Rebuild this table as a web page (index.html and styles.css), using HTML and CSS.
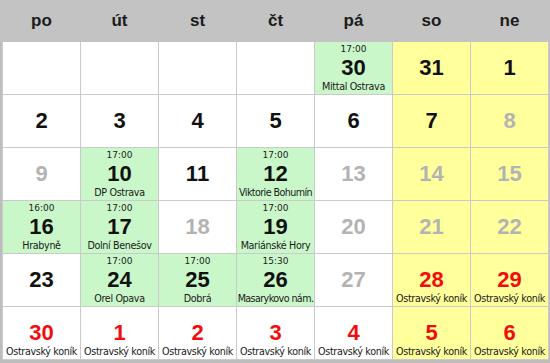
FILE: index.html
```html
<!DOCTYPE html>
<html lang="cs">
<head>
<meta charset="utf-8">
<title>Kalendář</title>
<link rel="stylesheet" href="styles.css">
</head>
<body>
<div class="cal">
  <div class="head">
    <div>po</div><div>út</div><div>st</div><div>čt</div><div>pá</div><div>so</div><div>ne</div>
  </div>
  <div class="grid">
    <div class="cell"></div>
    <div class="cell"></div>
    <div class="cell"></div>
    <div class="cell"></div>
    <div class="cell green"><span class="time">17:00</span><span class="num">30</span><span class="lbl">Mittal Ostrava</span></div>
    <div class="cell yellow"><span class="time"></span><span class="num">31</span><span class="lbl"></span></div>
    <div class="cell yellow"><span class="time"></span><span class="num">1</span><span class="lbl"></span></div>

    <div class="cell"><span class="time"></span><span class="num">2</span><span class="lbl"></span></div>
    <div class="cell"><span class="time"></span><span class="num">3</span><span class="lbl"></span></div>
    <div class="cell"><span class="time"></span><span class="num">4</span><span class="lbl"></span></div>
    <div class="cell"><span class="time"></span><span class="num">5</span><span class="lbl"></span></div>
    <div class="cell"><span class="time"></span><span class="num">6</span><span class="lbl"></span></div>
    <div class="cell yellow"><span class="time"></span><span class="num">7</span><span class="lbl"></span></div>
    <div class="cell yellow"><span class="time"></span><span class="num past">8</span><span class="lbl"></span></div>

    <div class="cell"><span class="time"></span><span class="num past">9</span><span class="lbl"></span></div>
    <div class="cell green"><span class="time">17:00</span><span class="num">10</span><span class="lbl">DP Ostrava</span></div>
    <div class="cell"><span class="time"></span><span class="num">11</span><span class="lbl"></span></div>
    <div class="cell green"><span class="time">17:00</span><span class="num">12</span><span class="lbl tight">Viktorie Bohumín</span></div>
    <div class="cell"><span class="time"></span><span class="num past">13</span><span class="lbl"></span></div>
    <div class="cell yellow"><span class="time"></span><span class="num past">14</span><span class="lbl"></span></div>
    <div class="cell yellow"><span class="time"></span><span class="num past">15</span><span class="lbl"></span></div>

    <div class="cell green"><span class="time">16:00</span><span class="num">16</span><span class="lbl">Hrabyně</span></div>
    <div class="cell green"><span class="time">17:00</span><span class="num">17</span><span class="lbl">Dolní Benešov</span></div>
    <div class="cell"><span class="time"></span><span class="num past">18</span><span class="lbl"></span></div>
    <div class="cell green"><span class="time">17:00</span><span class="num">19</span><span class="lbl">Mariánské Hory</span></div>
    <div class="cell"><span class="time"></span><span class="num past">20</span><span class="lbl"></span></div>
    <div class="cell yellow"><span class="time"></span><span class="num past">21</span><span class="lbl"></span></div>
    <div class="cell yellow"><span class="time"></span><span class="num past">22</span><span class="lbl"></span></div>

    <div class="cell"><span class="time"></span><span class="num">23</span><span class="lbl"></span></div>
    <div class="cell green"><span class="time">17:00</span><span class="num">24</span><span class="lbl">Orel Opava</span></div>
    <div class="cell green"><span class="time">17:00</span><span class="num">25</span><span class="lbl">Dobrá</span></div>
    <div class="cell green"><span class="time">15:30</span><span class="num">26</span><span class="lbl tight">Masarykovo nám.</span></div>
    <div class="cell"><span class="time"></span><span class="num past">27</span><span class="lbl"></span></div>
    <div class="cell yellow"><span class="time"></span><span class="num red">28</span><span class="lbl">Ostravský koník</span></div>
    <div class="cell yellow"><span class="time"></span><span class="num red">29</span><span class="lbl">Ostravský koník</span></div>

    <div class="cell"><span class="time"></span><span class="num red">30</span><span class="lbl">Ostravský koník</span></div>
    <div class="cell"><span class="time"></span><span class="num red">1</span><span class="lbl">Ostravský koník</span></div>
    <div class="cell"><span class="time"></span><span class="num red">2</span><span class="lbl">Ostravský koník</span></div>
    <div class="cell"><span class="time"></span><span class="num red">3</span><span class="lbl">Ostravský koník</span></div>
    <div class="cell"><span class="time"></span><span class="num red">4</span><span class="lbl">Ostravský koník</span></div>
    <div class="cell yellow"><span class="time"></span><span class="num red">5</span><span class="lbl">Ostravský koník</span></div>
    <div class="cell yellow"><span class="time"></span><span class="num red">6</span><span class="lbl">Ostravský koník</span></div>
  </div>
</div>
</body>
</html>
```

FILE: styles.css
```css
html, body {
  margin: 0;
  padding: 0;
}
body {
  width: 550px;
  height: 363px;
  overflow: hidden;
  background: #bdbdbd;
  font-family: "Liberation Sans", Arial, sans-serif;
}
.cal {
  width: 550px;
}
.head {
  height: 42px;
  background: #c3c3c3;
  display: grid;
  grid-template-columns: repeat(7, 77px);
  column-gap: 1px;
  padding-left: 3px;
  align-items: center;
}
.head div {
  text-align: center;
  font-weight: bold;
  font-size: 17px;
  color: #1c1c1c;
  padding-bottom: 1px;
}
.grid {
  margin-left: 2px;
  display: grid;
  grid-template-columns: repeat(7, 77px);
  grid-auto-rows: 52px;
  gap: 1px;
  padding: 0 1px 1px 1px;
  box-sizing: border-box;
  width: 547px;
  background: #cacaca;
}
.cell {
  background: #ffffff;
  display: grid;
  grid-template-rows: 13px 1fr 15px;
  justify-items: center;
  align-items: center;
  overflow: hidden;
}
.cell.green {
  background: #c9f7c9;
}
.cell.yellow {
  background: #ffff9c;
}
.time {
  font-family: "DejaVu Sans", Verdana, sans-serif;
  font-size: 9px;
  color: #222;
  line-height: 13px;
  padding-top: 1px;
}
.num {
  font-weight: bold;
  font-size: 22px;
  color: #111;
  line-height: 24px;
  padding-top: 1px;
}
.num.past {
  color: #b3b3b3;
}
.num.red {
  color: #f20d0d;
}
.lbl {
  font-family: "DejaVu Sans", Verdana, sans-serif;
  font-size: 9.6px;
  letter-spacing: -0.35px;
  color: #1a1a1a;
  line-height: 14px;
  white-space: nowrap;
  align-self: start;
}
.lbl.tight {
  letter-spacing: -0.6px;
}
```
